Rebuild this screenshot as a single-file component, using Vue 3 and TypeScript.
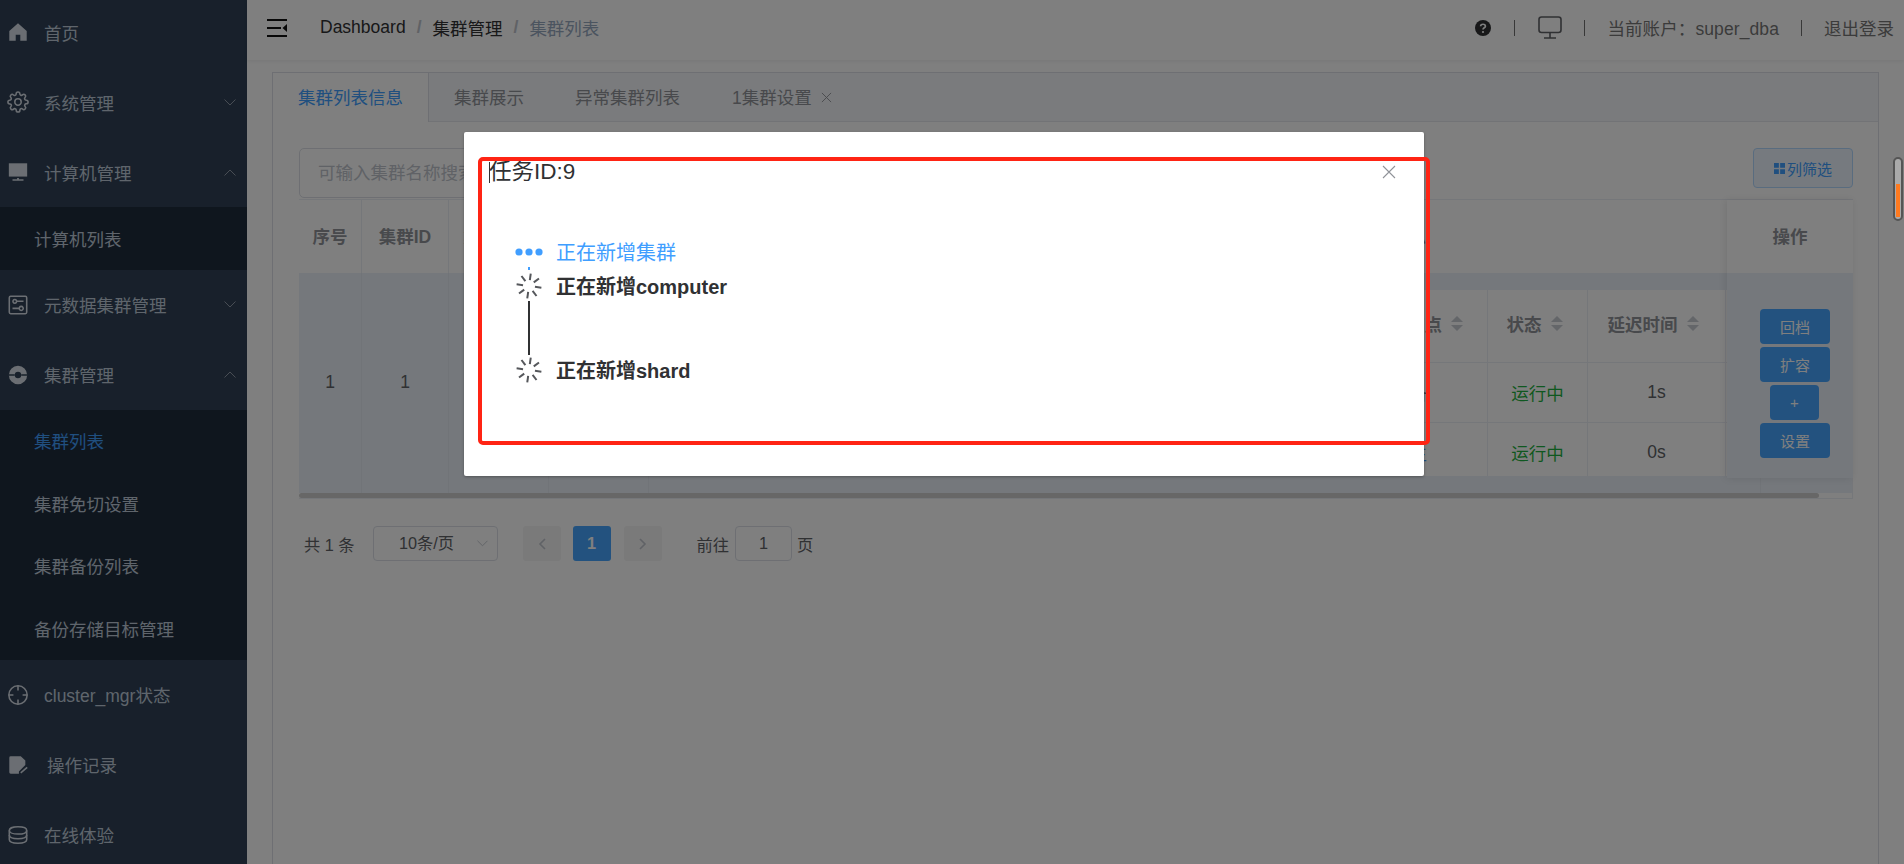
<script setup lang="ts">
interface IconPart { d: string; filled?: boolean; hole?: boolean; cut?: boolean }
interface MenuItem { label: string; icon: string; arrow?: 'up' | 'down'; shift?: boolean; children?: { label: string; active?: boolean }[] }

const icons: Record<string, IconPart[]> = {
  home: [{ d: 'M12 2.5 L2.5 11 V21.5 H9.5 V15 H14.5 V21.5 H21.5 V11 Z', filled: true }],
  gear: [
    { d: 'M12 8.5a3.5 3.5 0 1 0 0 7 3.5 3.5 0 0 0 0-7z' },
    { d: 'M19.4 15a1.65 1.65 0 0 0 .33 1.82l.06.06a2 2 0 0 1-2.83 2.83l-.06-.06a1.65 1.65 0 0 0-1.82-.33 1.65 1.65 0 0 0-1 1.51V21a2 2 0 0 1-4 0v-.09A1.65 1.65 0 0 0 9 19.4a1.65 1.65 0 0 0-1.82.33l-.06.06a2 2 0 0 1-2.83-2.83l.06-.06a1.65 1.65 0 0 0 .33-1.82 1.65 1.65 0 0 0-1.51-1H3a2 2 0 0 1 0-4h.09A1.65 1.65 0 0 0 4.6 9a1.65 1.65 0 0 0-.33-1.82l-.06-.06a2 2 0 0 1 2.83-2.83l.06.06a1.65 1.65 0 0 0 1.82.33H9a1.65 1.65 0 0 0 1-1.51V3a2 2 0 0 1 4 0v.09a1.65 1.65 0 0 0 1 1.51 1.65 1.65 0 0 0 1.82-.33l.06-.06a2 2 0 0 1 2.83 2.83l-.06.06a1.65 1.65 0 0 0-.33 1.82V9a1.65 1.65 0 0 0 1.51 1H21a2 2 0 0 1 0 4h-.09a1.65 1.65 0 0 0-1.51 1z' }
  ],
  monitor: [
    { d: 'M2 2.5 H22 V17 H2 Z', filled: true },
    { d: 'M11 18.5 H13 V20 H18 V21.5 H6 V20 H11 Z', filled: true }
  ],
  sliders: [
    { d: 'M4 2.5 H20 A1.5 1.5 0 0 1 21.5 4 V20 A1.5 1.5 0 0 1 20 21.5 H4 A1.5 1.5 0 0 1 2.5 20 V4 A1.5 1.5 0 0 1 4 2.5 Z' },
    { d: 'M8.5 6 a2 2 0 1 0 .01 0 M11 8 H18' },
    { d: 'M15.5 13.5 a2.2 2.2 0 1 0 .01 0 M6 15.7 H13' }
  ],
  compass: [
    { d: 'M12 2a10 10 0 1 0 0 20 10 10 0 0 0 0-20z M12 8.5a3.5 3.5 0 1 1 0 7 3.5 3.5 0 0 1 0-7z', filled: true, hole: true },
    { d: 'M2 12 H8.5 M15.5 12 H22', cut: true }
  ],
  crosshair: [
    { d: 'M12 2a10 10 0 1 0 0 20 10 10 0 0 0 0-20z' },
    { d: 'M12 2 V7 M12 17 V22 M2 12 H7 M17 12 H22' }
  ],
  doc: [
    { d: 'M4 2.5 H15 L20 7 V12 L13 19 V21.5 H4 A1.5 1.5 0 0 1 2.5 20 V4 A1.5 1.5 0 0 1 4 2.5 Z', filled: true },
    { d: 'M15 20.5 L22 14.5' }
  ],
  db: [
    { d: 'M12 3c5 0 9.5 1.5 9.5 4s-4.5 4-9.5 4-9.5-1.5-9.5-4 4.5-4 9.5-4z' },
    { d: 'M2.5 7 V17 c0 2.5 4.5 4 9.5 4s9.5-1.5 9.5-4 V7' },
    { d: 'M2.5 12 c0 2.5 4.5 4 9.5 4s9.5-1.5 9.5-4' }
  ]
}

function strokeOf(p: IconPart): string {
  if (p.cut) return '#304156'
  return p.filled ? 'none' : 'currentColor'
}

const menu: MenuItem[] = [
  { label: '首页', icon: 'home' },
  { label: '系统管理', icon: 'gear', arrow: 'down' },
  { label: '计算机管理', icon: 'monitor', arrow: 'up', children: [{ label: '计算机列表' }] },
  { label: '元数据集群管理', icon: 'sliders', arrow: 'down' },
  {
    label: '集群管理', icon: 'compass', arrow: 'up',
    children: [
      { label: '集群列表', active: true },
      { label: '集群免切设置' },
      { label: '集群备份列表' },
      { label: '备份存储目标管理' }
    ]
  },
  { label: 'cluster_mgr状态', icon: 'crosshair' },
  { label: '操作记录', icon: 'doc', shift: true },
  { label: '在线体验', icon: 'db' }
]

const tabs = ['集群列表信息', '集群展示', '异常集群列表']
const actions = [
  { label: '回档' },
  { label: '扩容' },
  { label: '+', small: true },
  { label: '设置' }
]
const nested = [
  { role: '备', roleClass: '', state: '运行中', delay: '1s' },
  { role: '主', roleClass: 'link', state: '运行中', delay: '0s' }
]

const spokes = Array.from({ length: 8 }, (_, i) => {
  const a = ((i * 45 + 8) * Math.PI) / 180
  return {
    x1: 13 + Math.sin(a) * 6,
    y1: 13 - Math.cos(a) * 6,
    x2: 13 + Math.sin(a) * 12.5,
    y2: 13 - Math.cos(a) * 12.5
  }
})
</script>

<template>
  <div class="app">
    <aside class="sidebar">
      <div class="menu">
        <template v-for="item in menu" :key="item.label">
          <div class="menu-item" :class="{ shift: item.shift }">
            <svg class="menu-icon" viewBox="0 0 24 24">
              <path
                v-for="(p, i) in icons[item.icon]"
                :key="i"
                :d="p.d"
                :fill="p.filled ? 'currentColor' : 'none'"
                :fill-rule="p.hole ? 'evenodd' : 'nonzero'"
                :stroke="strokeOf(p)"
                stroke-width="1.7"
              />
            </svg>
            <span class="menu-label">{{ item.label }}</span>
            <svg v-if="item.arrow" class="menu-arrow" viewBox="0 0 12 7">
              <polyline :points="item.arrow === 'down' ? '0.5,0.5 6,6 11.5,0.5' : '0.5,6.5 6,1 11.5,6.5'" fill="none" stroke="currentColor" stroke-width="1" />
            </svg>
          </div>
          <div v-if="item.children" class="submenu">
            <div v-for="c in item.children" :key="c.label" class="sub-item" :class="{ active: c.active }">{{ c.label }}</div>
          </div>
        </template>
      </div>
    </aside>

    <main class="main">
      <header class="topbar">
        <svg class="hamburger" viewBox="0 0 20 18">
          <path d="M0 1 H20 M0 9 H14 M0 17 H20" stroke="#111" stroke-width="2" fill="none" />
          <path d="M20 5 V13 L15.5 9 Z" fill="#111" />
        </svg>
        <nav class="crumbs">
          <span>Dashboard</span><i>/</i><span>集群管理</span><i>/</i><span class="last">集群列表</span>
        </nav>
        <div class="top-right">
          <svg class="help" viewBox="0 0 16 16">
            <circle cx="8" cy="8" r="8" fill="#303133" />
            <path d="M5.6 6.2 C5.6 3.6 10.4 3.6 10.4 6.2 C10.4 7.9 8 7.7 8 9.6" fill="none" stroke="#fff" stroke-width="1.7" />
            <circle cx="8" cy="12" r="1.1" fill="#fff" />
          </svg>
          <span class="sep"></span>
          <svg class="screen" viewBox="0 0 24 23">
            <rect x="1" y="1" width="22" height="15.5" rx="2.5" fill="none" stroke="#606266" stroke-width="1.6" />
            <path d="M12 16.5 V21.5 M6 22 H18" stroke="#606266" stroke-width="1.6" fill="none" />
          </svg>
          <span class="sep"></span>
          <span class="account wide">当前账户：super_dba</span>
          <span class="sep"></span>
          <span class="account">退出登录</span>
        </div>
      </header>

      <section class="content">
        <div class="card">
          <div class="tabs">
            <div v-for="(t, i) in tabs" :key="t" class="tab" :class="{ current: i === 0 }">{{ t }}</div>
            <div class="tab closable">1集群设置
              <svg class="tab-x" viewBox="0 0 12 12"><path d="M1 1 L11 11 M11 1 L1 11" stroke="#909399" stroke-width="1" /></svg>
            </div>
          </div>
          <div class="pane">
            <div class="toolbar">
              <div class="search">可输入集群名称搜索</div>
              <button class="filter">
                <svg viewBox="0 0 12 12" class="grid-icon"><path d="M0 0h5.3v5.3H0z M6.7 0H12v5.3H6.7z M0 6.7h5.3V12H0z M6.7 6.7H12V12H6.7z" fill="currentColor" /></svg>列筛选
              </button>
            </div>

            <div class="table">
              <div class="thead">
                <div class="th c1">序号</div>
                <div class="th c2">集群ID</div>
                <div class="th c3">集群名称</div>
                <div class="th c3"></div>
                <div class="th grow">节点信息</div>
              </div>
              <div class="tbody">
                <div class="td c1">1</div>
                <div class="td c2">1</div>
                <div class="td c3"></div>
                <div class="td c3"></div>
                <div class="nest-wrap">
                  <div class="nested">
                    <div class="nrow head">
                      <div class="ncell nc-node">主备节点<span class="carets"></span></div>
                      <div class="ncell nc-state">状态<span class="carets"></span></div>
                      <div class="ncell nc-delay">延迟时间<span class="carets"></span></div>
                      <div class="ncell nc-end"></div>
                    </div>
                    <div v-for="(r, i) in nested" :key="i" class="nrow">
                      <div class="ncell nc-node role" :class="r.roleClass">{{ r.role }}</div>
                      <div class="ncell nc-state ok">{{ r.state }}</div>
                      <div class="ncell nc-delay">{{ r.delay }}</div>
                      <div class="ncell nc-end"></div>
                    </div>
                  </div>
                </div>
                <div class="td tail"></div>
              </div>
              <div class="hscroll"></div>

              <div class="fixed-col">
                <div class="fixed-head">操作</div>
                <div class="fixed-body">
                  <button v-for="a in actions" :key="a.label" class="act" :class="{ small: a.small }">{{ a.label }}</button>
                </div>
              </div>
            </div>

            <div class="pager">
              <span class="total">共 1 条</span>
              <div class="size">10条/页
                <svg viewBox="0 0 12 7" class="size-arrow"><polyline points="0.5,0.5 6,6 11.5,0.5" fill="none" stroke="currentColor" stroke-width="1" /></svg>
              </div>
              <div class="pg prev"><svg viewBox="0 0 8 12"><polyline points="7,1 2,6 7,11" fill="none" stroke="currentColor" stroke-width="1.6" /></svg></div>
              <div class="pg on">1</div>
              <div class="pg next"><svg viewBox="0 0 8 12"><polyline points="1,1 6,6 1,11" fill="none" stroke="currentColor" stroke-width="1.6" /></svg></div>
              <span class="goto">前往</span>
              <div class="goto-input">1</div>
              <span class="goto-end">页</span>
            </div>
          </div>
        </div>
      </section>
    </main>

    <div class="mask">
      <div class="dialog">
        <div class="dialog-title"><span class="caret-line"></span>任务ID:9</div>
        <svg class="dialog-close" viewBox="0 0 14 14"><path d="M1 1 L13 13 M13 1 L1 13" stroke="#909399" stroke-width="1.1" /></svg>
        <div class="steps">
          <div class="step running">
            <svg class="dots" viewBox="0 0 28 8">
              <circle cx="4" cy="4" r="3.6" fill="#409eff" />
              <circle cx="14" cy="4" r="3.6" fill="#409eff" />
              <circle cx="24" cy="4" r="3.6" fill="#409eff" />
            </svg>
            <span>正在新增集群</span>
          </div>
          <div class="tick"></div>
          <div class="step">
            <svg class="spin" viewBox="0 0 26 26">
              <line v-for="(s, i) in spokes" :key="i" :x1="s.x1" :y1="s.y1" :x2="s.x2" :y2="s.y2" stroke="#55575b" stroke-width="2" />
            </svg>
            <span>正在新增computer</span>
          </div>
          <div class="link-line"></div>
          <div class="step">
            <svg class="spin" viewBox="0 0 26 26">
              <line v-for="(s, i) in spokes" :key="i" :x1="s.x1" :y1="s.y1" :x2="s.x2" :y2="s.y2" stroke="#55575b" stroke-width="2" />
            </svg>
            <span>正在新增shard</span>
          </div>
        </div>
      </div>
    </div>

    <div class="red-mark"></div>
    <div class="pill"><div class="pill-fill"></div></div>
  </div>
</template>

<style>
html, body { margin: 0; height: 100%; overflow: hidden; background: #fff; }
</style>

<style scoped>
.app {
  position: relative;
  display: flex;
  width: 100%;
  height: 100vh;
  overflow: hidden;
  font-family: "Liberation Sans", "Noto Sans CJK SC", sans-serif;
  font-size: 17.5px;
  color: #606266;
}
.sidebar { flex: 0 0 247px; background: #304156; overflow: hidden; }
.menu { margin-top: -3px; }
.menu-item { display: flex; align-items: center; height: 70px; color: #bfcbd9; }
.menu-icon { width: 22px; height: 22px; margin-left: 7px; color: #d6dde6; flex: none; }
.menu-label { margin-left: 15px; }
.shift .menu-label { margin-left: 18px; }
.menu-arrow { width: 12px; height: 7px; margin-left: auto; margin-right: 11px; color: #909aa8; }
.submenu { background: #1f2d3d; }
.sub-item { display: flex; align-items: center; height: 62.5px; padding-left: 34px; color: #bfcbd9; }
.sub-item.active { color: #409eff; }

.main { flex: 1; min-width: 0; display: flex; flex-direction: column; }
.topbar {
  flex: 0 0 60px;
  box-sizing: border-box;
  display: flex;
  align-items: center;
  padding: 0 10px 5px 20px;
  box-shadow: 0 1px 4px rgba(0, 21, 41, 0.08);
}
.hamburger { width: 20px; height: 18px; flex: none; }
.crumbs { margin-left: 33px; display: flex; align-items: center; color: #303133; }
.crumbs i { font-style: normal; color: #c0c4cc; font-weight: 700; margin: 0 11px; }
.crumbs .last { color: #97a8be; }
.top-right { margin-left: auto; display: flex; align-items: center; gap: 22px; color: #777; }
.help { width: 16px; height: 16px; margin-right: 1px; }
.screen { width: 24px; height: 23px; margin-left: 1px; }
.sep { width: 1px; height: 16px; background: #707070; }
.account { white-space: nowrap; }
.account.wide { letter-spacing: 0.1px; }

.content { flex: 1; min-height: 0; padding: 12px 25px 0; }
.card { height: 100%; box-sizing: border-box; border: 1px solid #dcdfe6; border-bottom: 0; }
.tabs { display: flex; height: 48px; background: #f5f7fa; border-bottom: 1px solid #e4e7ed; }
.tab { padding: 1px 25px 0; line-height: 48px; color: #909399; white-space: nowrap; }
.tab:nth-child(2) { padding-right: 26px; }
.tab.current { color: #409eff; background: #fff; border-right: 1px solid #dcdfe6; height: 48px; }
.tab.closable { display: flex; align-items: center; height: 47px; padding-left: 27px; }
.tab-x { width: 11px; height: 11px; margin-left: 9px; }
.pane { padding: 26px 25px 0 26px; }
.toolbar { display: flex; justify-content: space-between; align-items: flex-start; height: 51px; }
.search {
  box-sizing: border-box;
  width: 420px;
  height: 50px;
  line-height: 48px;
  padding-left: 18px;
  border: 1px solid #dcdfe6;
  border-radius: 5px;
  color: #c0c4cc;
}
.filter {
  box-sizing: border-box;
  width: 100px;
  height: 40px;
  margin: 0;
  padding: 0;
  display: flex;
  align-items: center;
  justify-content: center;
  font: inherit;
  font-size: 15px;
  color: #409eff;
  background: #ecf5ff;
  border: 1px solid #b3d8ff;
  border-radius: 4px;
}
.grid-icon { width: 11px; height: 11px; margin-right: 2px; }

.table { position: relative; box-sizing: border-box; border-top: 1px solid #ebeef5; border-right: 1px solid #ebeef5; border-bottom: 1px solid #ebeef5; width: 1554px; }
.thead { display: flex; height: 73px; }
.th { display: flex; align-items: center; justify-content: center; padding-bottom: 3px; font-weight: 700; color: #909399; box-sizing: border-box; border-right: 1px solid #ebeef5; white-space: nowrap; }
.c1 { flex: 0 0 63px; }
.c2 { flex: 0 0 87px; }
.c3 { flex: 0 0 100px; }
.th.grow { flex: 1; justify-content: flex-end; padding-right: 426px; border-right: 0; }
.tbody { display: flex; height: 220px; background: #eaf0f8; }
.td { display: flex; align-items: center; justify-content: center; padding-bottom: 2px; box-sizing: border-box; border-right: 1px solid #e2e8f0; color: #606266; }
.tail { flex: 0 0 92px; border-right: 0; border-left: 1px solid #e2e8f0; }
.nest-wrap { flex: 1; min-width: 0; padding-top: 17px; }
.nested { height: 186px; overflow: hidden; background: #fff; }
.nrow { display: flex; height: 60px; border-bottom: 1px solid #ebeef5; box-sizing: border-box; }
.nrow.head { height: 73px; padding-bottom: 0; font-weight: 700; color: #909399; }
.nrow.head .ncell { padding-bottom: 5px; }
.nrow.head .nc-state { padding-right: 6px; }
.nrow.head .nc-delay { padding-right: 7px; }
.ncell { display: flex; align-items: center; justify-content: center; box-sizing: border-box; border-right: 1px solid #ebeef5; white-space: nowrap; }
.nc-node { flex: 1; justify-content: flex-end; padding-right: 24px; }
.nc-node.role { padding-right: 60px; color: #606266; }
.nc-node.link { color: #409eff; }
.nc-state { flex: 0 0 100px; }
.nc-delay { flex: 0 0 138px; }
.nc-end { flex: 0 0 34px; border-right: 0; }
.ok { color: #1fb141; }
.carets { position: relative; display: inline-block; width: 12px; height: 15px; margin-left: 9px; }
.carets::before, .carets::after { content: ""; position: absolute; left: 0; width: 0; height: 0; border-style: solid; border-color: transparent; }
.carets::before { top: 0; border-width: 0 6px 6.5px; border-bottom-color: #c8ccd2; }
.carets::after { bottom: 0; border-width: 6.5px 6px 0; border-top-color: #c8ccd2; }

.hscroll { height: 5px; width: 1520px; background: #cfcfcf; border-radius: 3px; }
.fixed-col {
  position: absolute;
  top: 0;
  right: -1px;
  width: 126px;
  box-shadow: -1px 0 8px rgba(0, 0, 0, 0.1);
}
.fixed-head { display: flex; align-items: center; justify-content: center; height: 73px; padding-bottom: 3px; box-sizing: border-box; background: #fff; font-weight: 700; color: #909399; }
.fixed-body {
  box-sizing: border-box;
  height: 205px;
  padding-top: 36px;
  display: flex;
  flex-direction: column;
  align-items: center;
  gap: 3px;
  background: #eaf0f8;
}
.act {
  box-sizing: border-box;
  width: 70px;
  height: 35px;
  margin: 0 0 0 10px;
  padding: 0;
  border: 0;
  border-radius: 4px;
  background: #46a5ff;
  color: #fff;
  font: inherit;
  font-size: 15px;
}
.act.small { width: 49px; margin-left: 9px; }

.pager { display: flex; align-items: center; height: 35px; margin-top: 27px; padding-left: 5px; font-size: 16.25px; }
.total { width: 50px; white-space: nowrap; }
.size {
  position: relative;
  box-sizing: border-box;
  width: 125px;
  height: 35px;
  margin-left: 19px;
  line-height: 32px;
  padding-left: 25px;
  border: 1px solid #dcdfe6;
  border-radius: 4px;
}
.size-arrow { position: absolute; right: 9px; top: 13px; width: 11px; height: 7px; color: #c0c4cc; }
.pg {
  display: flex;
  align-items: center;
  justify-content: center;
  width: 38px;
  height: 35px;
  border-radius: 3px;
  background: #f4f4f5;
  color: #c0c4cc;
  font-weight: 700;
}
.pg svg { width: 8px; height: 12px; }
.prev { margin-left: 25px; }
.pg.on { margin-left: 11.5px; background: #46a5ff; color: #fff; }
.next { margin-left: 13px; }
.goto { margin-left: 35px; }
.goto-input {
  box-sizing: border-box;
  width: 57px;
  height: 35px;
  margin-left: 6px;
  line-height: 32px;
  text-align: center;
  border: 1px solid #dcdfe6;
  border-radius: 4px;
}
.goto-end { margin-left: 5px; }

.mask { position: absolute; inset: 0; background: rgba(0, 0, 0, 0.5); }
.dialog {
  position: relative;
  box-sizing: border-box;
  width: 960px;
  height: 344px;
  margin: 132px 0 0 464px;
  padding: 25px 25px 0;
  background: #fff;
  border-radius: 2px;
  box-shadow: 0 1px 3px rgba(0, 0, 0, 0.3);
  color: #303133;
}
.dialog-title { position: relative; height: 30px; line-height: 30px; font-size: 22.5px; }
.caret-line { position: absolute; left: 0; top: 5px; width: 1px; height: 21px; background: #303133; }
.dialog-close { position: absolute; top: 33px; right: 28px; width: 14px; height: 14px; }
.steps { display: flex; flex-direction: column; margin: 53px 0 0 26px; font-size: 20px; }
.step { display: flex; align-items: center; height: 30px; font-weight: 700; white-space: nowrap; }
.step > span { position: relative; top: -1px; }
.step > svg { flex: none; width: 28px; margin-right: 13px; }
.step.running { height: 24px; color: #409eff; font-weight: 400; }
.dots { height: 8px; }
.spin { height: 26px; }
.tick { width: 2px; height: 3px; margin: 3px 0 1px 13px; background: #409eff; }
.link-line { width: 2px; height: 54px; margin-left: 13px; background: #303133; }

.red-mark {
  position: absolute;
  left: 478px;
  top: 157px;
  box-sizing: border-box;
  width: 952px;
  height: 288px;
  border: 4px solid #ff2414;
  border-radius: 5px;
}
.pill {
  position: absolute;
  top: 157px;
  right: 1px;
  box-sizing: border-box;
  width: 10px;
  height: 64px;
  border: 2px solid #555;
  border-radius: 5px;
  background: #aaa;
  overflow: hidden;
}
.pill-fill { width: 4px; height: 33px; margin: 25px 0 0 1px; background: #ff7a1f; }
</style>
